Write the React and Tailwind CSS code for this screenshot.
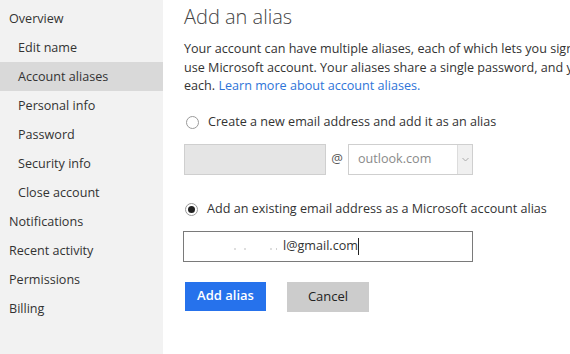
import React from "react";

const font = { fontFamily: '"Open Sans", "Noto Sans", sans-serif' };

function NavItem({ label, sub, active }) {
  return (
    <div
      className={`h-[29px] flex items-center pt-[1px] text-[12.6px] text-[#333] ${sub ? "pl-[18px]" : "pl-[9px]"} ${active ? "bg-[#d9d9d9]" : ""}`}
    >
      {label}
    </div>
  );
}

function Radio({ checked }) {
  return (
    <span className="w-[13px] h-[13px] rounded-full border border-[#9a9a9a] bg-white flex items-center justify-center shrink-0">
      {checked && <span className="w-[7px] h-[7px] rounded-full bg-[#222]" />}
    </span>
  );
}

export default function App() {
  return (
    <div
      className="w-[570px] h-[354px] flex overflow-hidden bg-white"
      style={font}
    >
      <aside className="w-[163px] shrink-0 bg-[#f2f2f2] pt-[4px]">
        <NavItem label="Overview" />
        <NavItem label="Edit name" sub />
        <NavItem label="Account aliases" sub active />
        <NavItem label="Personal info" sub />
        <NavItem label="Password" sub />
        <NavItem label="Security info" sub />
        <NavItem label="Close account" sub />
        <NavItem label="Notifications" />
        <NavItem label="Recent activity" />
        <NavItem label="Permissions" />
        <NavItem label="Billing" />
      </aside>

      <main className="flex-1 pl-[21px] pt-[2px] min-w-0">
        <h1 className="text-[20px] font-light text-[#444] leading-[30px] whitespace-nowrap">
          Add an alias
        </h1>
        <p className="mt-[8px] text-[12.6px] leading-[18.5px] text-[#333] whitespace-nowrap">
          Your account can have multiple aliases, each of which lets you sign in with
          <br />
          use Microsoft account. Your aliases share a single password, and you can
          <br />
          each.{" "}
          <a className="text-[#2e74d8]">Learn more about account aliases.</a>
        </p>

        <label className="mt-[17px] flex items-center gap-[9px] h-[20px] text-[12.6px] text-[#333] whitespace-nowrap">
          <span className="pl-[2px]">
            <Radio />
          </span>
          Create a new email address and add it as an alias
        </label>

        <div className="mt-[11px] flex items-center h-[31px]">
          <div className="w-[142px] h-[31px] bg-[#e5e5e5] border border-[#cfcfcf]" />
          <span className="w-[22px] text-center text-[13px] text-[#555]">@</span>
          <div className="w-[125px] h-[31px] border border-[#cfcfcf] bg-white flex items-center">
            <span className="flex-1 pl-[9px] text-[12.6px] text-[#8a8a8a]">outlook.com</span>
            <span className="w-[15px] h-full border-l border-[#dcdcdc] bg-[#f0f0f0] flex items-center justify-center">
              <svg width="7" height="5" viewBox="0 0 7 5">
                <path d="M0.5 1 L3.5 4 L6.5 1" fill="none" stroke="#aaa" strokeWidth="1" />
              </svg>
            </span>
          </div>
        </div>

        <label className="mt-[25px] flex items-center gap-[9px] h-[20px] text-[12.6px] text-[#333] whitespace-nowrap">
          <span className="pl-[1px]">
            <Radio checked />
          </span>
          Add an existing email address as a Microsoft account alias
        </label>

        <div className="mt-[11px] -ml-[1px] w-[290px] h-[31px] border border-[#7a7a7a] bg-white flex items-center pl-[12px] text-[12.6px]">
          <span className="w-[87px] h-full flex items-center pt-[6px]">
            <span className="ml-[38px] w-[2px] h-[2px] bg-[#dedede]" />
            <span className="ml-[8px] w-[2px] h-[2px] bg-[#dedede]" />
            <span className="ml-[24px] w-[2px] h-[2px] bg-[#dedede]" />
            <span className="ml-[4px] w-[1px] h-[2px] bg-[#d0d0d0]" />
          </span>
          <span className="text-[#333]">l@gmail.com</span>
          <span className="w-px h-[17px] bg-[#222]" />
        </div>

        <div className="mt-[20px] flex gap-[21px] pl-[1px]">
          <button className="w-[81px] h-[29px] bg-[#2672ec] text-white text-[13px] font-semibold">
            Add alias
          </button>
          <button className="w-[82px] h-[30px] bg-[#cccccc] text-[#222] text-[13px]">
            Cancel
          </button>
        </div>
      </main>
    </div>
  );
}
